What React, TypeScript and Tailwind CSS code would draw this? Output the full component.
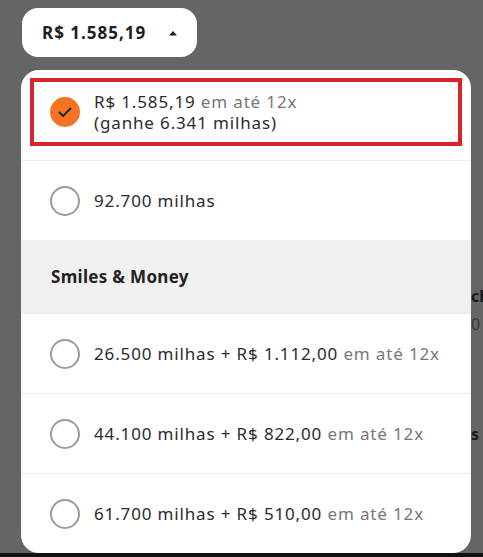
import React from "react";

const font = { fontFamily: "'Noto Sans', 'Open Sans', sans-serif" };

function Radio({ checked }: { checked?: boolean }) {
  if (checked) {
    return (
      <span className="flex h-[30px] w-[30px] shrink-0 items-center justify-center rounded-full bg-[#f47424]">
        <svg width="16" height="16" viewBox="0 0 16 16" fill="none">
          <path d="M2.5 8.5l3.5 3.5 7.5-7.5" stroke="#222" strokeWidth="1.8" strokeLinecap="round" strokeLinejoin="round" />
        </svg>
      </span>
    );
  }
  return <span className="h-[30px] w-[30px] shrink-0 rounded-full border-2 border-[#9b9b9b] bg-white" />;
}

function Option({ main, extra }: { main: string; extra?: string }) {
  return (
    <div className="flex h-[80px] items-center gap-[14px] border-t border-[#ececec] pl-[29px]">
      <Radio />
      <p className="whitespace-nowrap text-[17px] tracking-[0.85px] text-[#2b2b2b]">
        {main}
        {extra && <span className="text-[#777]"> {extra}</span>}
      </p>
    </div>
  );
}

export default function App() {
  return (
    <div className="relative h-[557px] w-[483px] overflow-hidden bg-[#656565]" style={font}>
      {/* page under the overlay, mostly hidden */}
      <span className="absolute left-[471px] top-[284px] text-[16px] font-bold text-[#1a1a1a]">ch</span>
      <span className="absolute left-[471px] top-[312px] text-[16px] text-[#3a3a3a]">0</span>
      <span className="absolute left-[471px] top-[422px] text-[16px] font-bold text-[#1a1a1a]">s</span>
      <div className="absolute bottom-0 left-0 h-[4px] w-full bg-[#111]" />

      <div className="pl-[22px] pt-[8px]">
        <button className="flex h-[49px] w-[175px] items-center gap-[22px] rounded-[16px] bg-white pl-[20px] text-[17px] font-bold tracking-[1px] text-[#1e1e1e]">
          R$ 1.585,19
          <svg width="10" height="8" viewBox="0 0 10 8">
            <path d="M1 6.5L5 2l4 4.5z" fill="#1e1e1e" />
          </svg>
        </button>
      </div>

      <div className="ml-[21px] mt-[13px] w-[450px] overflow-hidden rounded-[18px] bg-white">
        <div className="px-[9px] pt-[8px] pb-[14px]">
          <div className="flex h-[68px] items-center gap-[14px] border-4 border-[#d9222a] pl-[16px]">
            <Radio checked />
            <p className="text-[17px] leading-[21px] tracking-[0.85px] text-[#2b2b2b]">
              R$ 1.585,19 <span className="text-[#777]">em até 12x</span>
              <br />
              (ganhe 6.341 milhas)
            </p>
          </div>
        </div>
        <Option main="92.700 milhas" />
        <div className="flex h-[73px] items-center bg-[#f0f0f0] pl-[30px] text-[17px] font-bold tracking-[0.3px] text-[#222]">
          Smiles &amp; Money
        </div>
        <Option main="26.500 milhas + R$ 1.112,00" extra="em até 12x" />
        <Option main="44.100 milhas + R$ 822,00" extra="em até 12x" />
        <Option main="61.700 milhas + R$ 510,00" extra="em até 12x" />
      </div>
    </div>
  );
}
